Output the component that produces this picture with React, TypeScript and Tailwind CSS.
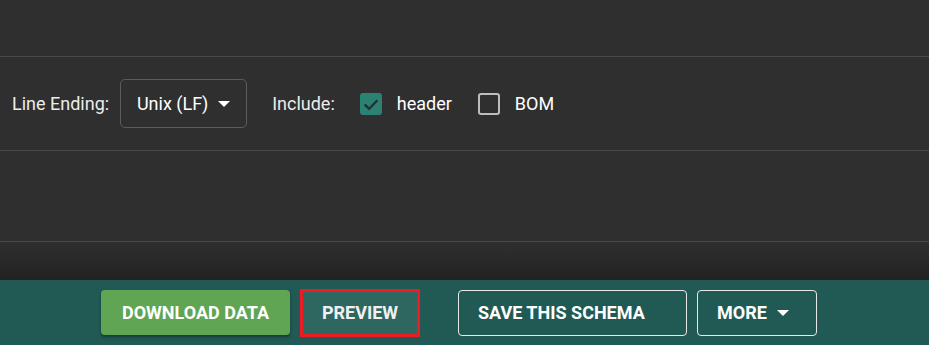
import React, { useState } from "react";

function Caret() {
  return (
    <svg width="12" height="6" viewBox="0 0 12 6" className="ml-[10px]">
      <path d="M0 0 L12 0 L6 6 Z" fill="currentColor" />
    </svg>
  );
}

function Box({ checked }: { checked: boolean }) {
  if (!checked) {
    return <span className="h-[22px] w-[22px] rounded-[3px] border-2 border-[#bdbdbd]" />;
  }
  return (
    <span className="flex h-[22px] w-[22px] items-center justify-center rounded-[3px] bg-[#2b8274]">
      <svg width="18" height="18" viewBox="0 0 24 24">
        <path d="M3.5 12.5 L9.5 18.5 L20.5 7" fill="none" stroke="#233130" strokeWidth="3.2" />
      </svg>
    </span>
  );
}

export default function App() {
  const [header, setHeader] = useState(true);
  const [bom, setBom] = useState(false);

  return (
    <div className="flex h-[345px] w-[929px] flex-col overflow-hidden bg-[#2f2f2f] font-['Roboto',sans-serif] text-[#ececec]">
      <div className="h-[57px] border-b border-[#484848]" />

      <div className="flex h-[94px] items-center border-b border-[#484848] pl-[12px] text-[18px]">
        <span>Line Ending:</span>
        <button className="ml-[11px] flex h-[49px] w-[127px] items-center justify-center rounded-[5px] border border-[#5c5c5c] text-white">
          Unix (LF)
          <Caret />
        </button>

        <span className="ml-[25px]">Include:</span>
        <button onClick={() => setHeader(!header)} className="ml-[25px] flex items-center">
          <Box checked={header} />
          <span className="ml-[15px] text-white">header</span>
        </button>
        <button onClick={() => setBom(!bom)} className="ml-[26px] flex items-center">
          <Box checked={bom} />
          <span className="ml-[15px] text-white">BOM</span>
        </button>
      </div>

      <div className="h-[91px] border-b border-[#484848]" />

      <div className="flex-1 bg-gradient-to-b from-[#2f2f2f] to-[#222222]" />

      <div className="flex h-[65px] items-center bg-[#215a54] pl-[101px] text-[18px] font-bold text-white">
        <button className="h-[45px] w-[189px] rounded-[4px] bg-[#5fa553] uppercase shadow-[0_2px_3px_rgba(0,0,0,0.35)]">
          Download Data
        </button>
        <button className="ml-[10px] h-[48px] w-[120px] border-[3px] border-[#ec1c24] bg-[#2e6760] uppercase text-[#f0f0f0]">
          Preview
        </button>
        <button className="ml-[38px] h-[46px] w-[229px] rounded-[4px] border border-[#e8e8e8] pl-[19px] text-left uppercase">
          Save this schema
        </button>
        <button className="ml-[10px] flex h-[46px] w-[120px] items-center rounded-[4px] border border-[#e8e8e8] pl-[19px] uppercase">
          More
          <Caret />
        </button>
      </div>
    </div>
  );
}
